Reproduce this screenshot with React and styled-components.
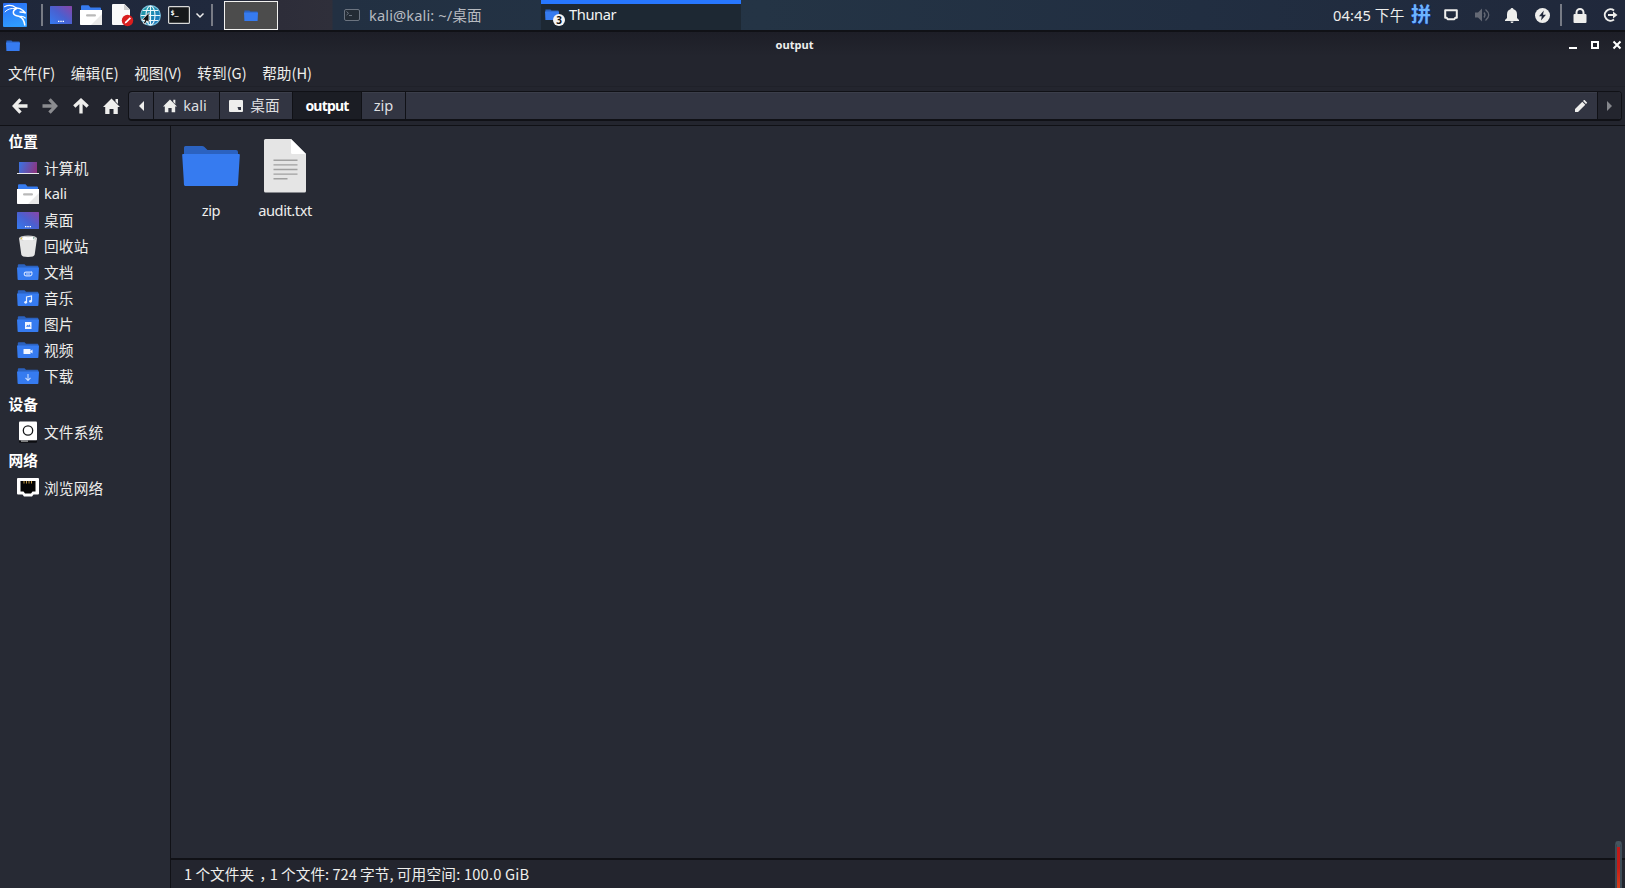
import React from 'react'
import styled, { createGlobalStyle, css } from 'styled-components'

const colors = {
  $bg: '#272a34',
  $bar: '#23252e',
  $line: '#101116',
  $button: '#323542',
  $active: '#1b1d24',
  $blue: '#367bf0',
  $darkBlue: '#2b62c0',
  $text: '#eeeeec',
}

const fonts = {
  $latin: '"Noto Sans", "Noto Sans CJK SC", sans-serif',
  $cjk: '"Noto Sans CJK SC", sans-serif',
}

const GlobalStyle = createGlobalStyle`
  * {
    box-sizing: border-box;
  }

  body {
    margin: 0;
    overflow: hidden;
    background: ${colors.$bg};
    color: ${colors.$text};
    font-family: ${fonts.$cjk};
    font-size: 14.67px;
    line-height: 20px;
    white-space: pre;
  }

  svg {
    display: block;
    flex: none;
    overflow: visible;
  }
`

const Desktop = styled.div`
  width: 1625px;
  height: 888px;
  display: flex;
  flex-direction: column;
`

/* panel */

const Panel = styled.header`
  height: 30px;
  flex: none;
  display: flex;
  align-items: center;
  background: linear-gradient(90deg, #1f273a 0, #20293d 220px, #2d2d39 280px, #2f2f3a 332px, #223042 333px, #243445 760px, #212e41 1200px, #20283b 1625px);
`

const Launchers = styled.div`
  width: 224px;
  height: 30px;
  flex: none;
  display: flex;
  align-items: center;
  padding-left: 3px;
`

const Slot = styled.div`
  width: ${p => p.$w}px;
  flex: none;
  display: flex;
  justify-content: ${p => p.$align || 'flex-start'};
`

const Separator = styled.div`
  width: 2px;
  height: 22px;
  flex: none;
  background: #777b85;
`

const Workspace = styled.div`
  width: 54px;
  height: 29px;
  margin-top: 1px;
  margin-right: 55px;
  flex: none;
  display: flex;
  align-items: center;
  justify-content: center;
  border: 1px solid #f2f2f0;
  background: #4c4c4c;
`

const Task = styled.div`
  width: ${p => p.$w}px;
  height: 30px;
  flex: none;
  display: flex;
  align-items: center;
  font-family: ${fonts.$latin};
  letter-spacing: 0.1px;
  color: #b6bac0;

  ${p => p.$active && css`
    border-top: 4px solid #2777ff;
    background: #1d2833;
    color: #f4f4f4;
    padding-bottom: 6px;
    letter-spacing: -0.4px;
  `}
`

const TaskIcon = styled.div`
  position: relative;
  margin-left: ${p => p.$left}px;
  margin-right: ${p => p.$right}px;
`

const Badge = styled.div`
  position: absolute;
  left: 8px;
  top: 5px;
  width: 12px;
  height: 12px;
  border-radius: 50%;
  background: #f4f4f4;
  color: #111;
  font: bold 10px/12px "Noto Sans", sans-serif;
  text-align: center;
`

const Tray = styled.div`
  margin-left: auto;
  height: 30px;
  display: flex;
  align-items: center;
`

const Clock = styled.div`
  width: 78px;
  letter-spacing: 0.1px;
  font-family: ${fonts.$latin};
`

const Pinyin = styled.div`
  width: 33px;
  margin-top: -3px;
  font-size: 20px;
  font-weight: bold;
  color: #6cb4ff;
  text-shadow: 1px 1px 0 #0a2a8c;
`

/* window */

const TitleBar = styled.div`
  height: 32px;
  flex: none;
  display: grid;
  grid-template-columns: 62px 1fr 100px;
  align-items: center;
  padding: 0 4px 4px 6px;
  border-top: 2px solid ${colors.$line};
  background: linear-gradient(#1d1e27, ${colors.$bar} 24px);
`

const Title = styled.div`
  text-align: center;
  font: bold 11.1px/18px ${fonts.$latin};
`

const WindowButtons = styled.div`
  display: flex;
  justify-content: flex-end;
  gap: 14px;
`

const MenuBar = styled.nav`
  height: 24px;
  flex: none;
  display: flex;
  align-items: center;
  gap: 15.5px;
  padding: 0 8px 2px;
  background: ${colors.$bar};
`

const ToolBar = styled.div`
  height: 40px;
  flex: none;
  display: flex;
  align-items: center;
  padding: 0 3px 0 12px;
  border-top: 1px solid #1f2129;
  border-bottom: 1px solid ${colors.$line};
  background: ${colors.$bar};
`

const PathBar = styled.div`
  height: 30px;
  flex: 1;
  display: flex;
  border: 1px solid ${colors.$line};
  border-bottom-width: 2px;
  border-radius: 4px;
  background: ${colors.$button};
  box-shadow: inset 0 1px 0 #3b3e4a;
`

const Crumb = styled.div`
  width: ${p => p.$w}px;
  flex: none;
  display: flex;
  align-items: center;
  justify-content: center;
  gap: ${p => p.$gap || 0}px;
  padding-right: ${p => p.$gap ? 3 : 0}px;
  border-right: 1px solid ${colors.$line};
  font-family: ${fonts.$latin};
  color: #dedfe0;

  span {
    margin-top: -1px;
  }

  ${p => p.$active && css`
    background: ${colors.$active};
    color: #fff;
    font-size: 14px;
    font-weight: bold;
    letter-spacing: -0.8px;

    span {
      margin-top: 1px;
    }
  `}
`

const PathEntry = styled.div`
  flex: 1;
  display: flex;
  align-items: center;
  justify-content: flex-end;
  padding-right: 10px;
`

const ScrollButton = styled.div`
  width: 24px;
  display: flex;
  align-items: center;
  justify-content: center;
  border-left: 1px solid ${colors.$line};
  border-radius: 0 3px 3px 0;
  background: ${colors.$bar};
`

const Body = styled.div`
  flex: 1;
  min-height: 0;
  display: flex;
`

const SideBar = styled.aside`
  width: 171px;
  flex: none;
  border-right: 1px solid ${colors.$line};
  background: ${colors.$bg};
`

const Heading = styled.div`
  height: 29px;
  padding: 5px 0 0 8.5px;
  line-height: 20px;
  font-weight: bold;
  color: #fff;
`

const Place = styled.div`
  height: ${p => p.$h || 26}px;
  display: flex;
  align-items: center;
  padding-left: 17px;
  letter-spacing: ${p => p.$latin ? -0.2 : 0.2}px;
  font-family: ${p => p.$latin ? fonts.$latin : fonts.$cjk};

  svg {
    margin-right: 5px;
  }

  span {
    margin-top: ${p => p.$h ? 1 : p.$latin ? -3 : -1}px;
  }
`

const Main = styled.main`
  flex: 1;
  display: flex;
  flex-direction: column;
`

const Files = styled.div`
  flex: 1;
  display: flex;
  align-items: flex-start;
  padding: 13px 0 0 3px;
`

const File = styled.div`
  width: 74px;
  display: flex;
  flex-direction: column;
  align-items: center;
  gap: 7px;
  font-family: ${fonts.$latin};
  letter-spacing: -0.45px;
`

const StatusBar = styled.footer`
  height: 30px;
  display: flex;
  align-items: center;
  padding: 0 0 0 13px;
  border-top: 2px solid ${colors.$line};
  background: ${colors.$bar};
`

const Comma = styled.span`
  margin-left: 2px;
  margin-right: 3px;
  font-feature-settings: "halt";
`

const FreeSpace = styled.span`
  letter-spacing: 0.2px;
`

const Meter = styled.div`
  position: absolute;
  left: 1615px;
  top: 841px;
  width: 7px;
  height: 47px;
  border: 2px solid #3e4c57;
  border-top: 6px solid #46545e;
  border-bottom: 0;
  border-radius: 3px 3px 0 0;
  background: linear-gradient(#c01818, #c41d16 50%, #d4401c);
`

/* icons */

const Defs = () => (
  <svg width="0" height="0" style={{ position: 'absolute' }}>
    <linearGradient id="screen" x1="0" y1="1" x2="1" y2="0">
      <stop offset="0" stopColor="#347bf0" />
      <stop offset="0.5" stopColor="#4a60d0" />
      <stop offset="1" stopColor="#8a45a8" />
    </linearGradient>
    <linearGradient id="laptop" x1="0" y1="0.4" x2="1" y2="0.6">
      <stop offset="0" stopColor="#3e6fdc" />
      <stop offset="1" stopColor="#8c3580" />
    </linearGradient>
    <linearGradient id="kali" x1="0" y1="0" x2="0.3" y2="1">
      <stop offset="0" stopColor="#2a6df5" />
      <stop offset="1" stopColor="#2f9bff" />
    </linearGradient>
    <linearGradient id="globe" x1="0" y1="0" x2="1" y2="1">
      <stop offset="0" stopColor="#22a4a0" />
      <stop offset="1" stopColor="#1b6fc4" />
    </linearGradient>
  </svg>
)

const KaliIcon = () => (
  <svg width="24" height="24" viewBox="0 0 24 24" fill="none" stroke="#fff" strokeLinecap="round">
    <rect width="24" height="24" rx="1" fill="url(#kali)" stroke="none" />
    <path d="M1.500 3.800C5 2 9.500 2.200 13 4.800" strokeWidth="1.200" />
    <path d="M2 8.800C4.500 6 8 5 12 5.600" strokeWidth="1" />
    <path d="M12.500 5c3-.3 5.500.6 7.500 2.600l2.700 2.600-3.200-1-2.500-.2" strokeWidth="1.400" />
    <path d="M13.500 5.500c-2.500 1.300-3.600 3-3 4.900.8 2.500 3.800 2.300 6.300 3.300 2.600 1 4.300 3.200 5 8.300" strokeWidth="1.500" />
    <path d="M16.500 13.500c2.500-.4 4.400.1 5.800 1.500" strokeWidth="1.100" />
  </svg>
)

const ScreenIcon = ({ h = 17 }) => (
  <svg width="22" height={h} viewBox="0 0 22 17" preserveAspectRatio="none">
    <rect width="22" height="17" rx="0.500" fill="url(#screen)" />
    <path d="M8 14h1.400v1.200H8zM10.300 14h1.400v1.200h-1.400zM12.600 14H14v1.200h-1.400z" fill="#fff" />
  </svg>
)

const HomeFolder = () => (
  <svg width="22" height="20" viewBox="0 0 22 20">
    <path d="M1 5V1.500Q1 .300 2 .300h6.500L10.500 2.500H20q1 0 1 1V6H1z" fill={colors.$blue} />
    <path d="M0 5h22v14.300q0 .7-.7.7H.7Q0 20 0 19.300z" fill="#fff" />
    <path d="M22 9v10.300q0 .7-.7.7H11z" fill="#e9e9e9" />
    <rect x="6" y="9.300" width="10" height="2.200" rx="1.100" fill="#b9b9b9" />
  </svg>
)

const NoteIcon = () => (
  <svg width="21" height="22" viewBox="0 0 21 22">
    <path d="M1 0h11.500L18 5.500V21H1q-1 0-1-1V1q0-1 1-1z" fill="#fafafa" />
    <path d="M12 0v6h6z" fill="#cfcfcf" />
    <circle cx="15.500" cy="16.500" r="5.700" fill="#d91e1e" />
    <path d="M12.700 19.500l.5-1.700 4.600-4.600 1.200 1.200-4.600 4.600z" fill="#fff" />
  </svg>
)

const GlobeIcon = () => (
  <svg width="21" height="21" viewBox="0 0 21 21" fill="none" stroke="#e9f6fb" strokeWidth="1.100">
    <circle cx="10.500" cy="10.500" r="9.900" fill="url(#globe)" stroke="#78bdda" />
    <ellipse cx="10.500" cy="10.500" rx="4.500" ry="9.500" />
    <path d="M10.500 1v19M1 10.500h19M2.700 5.500h15.600M2.700 15.500h15.600" />
    <path d="M9 7.500v10l-2.200-1.700-1.500 3.300-2-1 1.600-3H1.800z" fill="#111" stroke="#fff" strokeWidth=".8" />
  </svg>
)

const TerminalIcon = () => (
  <svg width="22" height="18" viewBox="0 0 22 18">
    <rect x=".6" y=".6" width="20.800" height="16.800" rx="1" fill="#16181a" stroke="#d8d8d8" strokeWidth="1.200" />
    <text x="2.500" y="8.800" fontSize="6.800" fontWeight="bold" fontFamily="DejaVu Sans Mono, monospace" fill="#fff">$_</text>
  </svg>
)

const TaskTerminal = () => (
  <svg width="16" height="12" viewBox="0 0 16 12" fill="none" stroke="#6b7480">
    <rect x=".5" y=".5" width="15" height="11" rx="1.500" fill="#232b34" />
    <path d="M2.500 2.500l2 1.800-2 1.800M5 6.500h3" />
  </svg>
)

const ChevronIcon = () => (
  <svg width="8" height="5" viewBox="0 0 8 5" fill="none" stroke="#eee" strokeWidth="1.500">
    <path d="M.5.500L4 4 7.500.500" />
  </svg>
)

const SmallFolder = () => (
  <svg width="14" height="11" viewBox="0 0 14 11">
    <path d="M.4 3V.500h5L6.500 1.500h7V4H.4z" fill={colors.$darkBlue} />
    <path d="M0 2.500h14L13.600 11H.4z" fill={colors.$blue} />
  </svg>
)

const FolderIcon = ({ children }) => (
  <svg width="22" height="16" viewBox="0 0 22 16">
    <path d="M.8 4V1.300Q.8.300 1.800.300h5.700L9 1.800h11.500q.8 0 .8.800V5H.8z" fill={colors.$darkBlue} />
    <path d="M0 3.500h22L21.400 15.300q0 .7-.8.7H1.400q-.8 0-.8-.7z" fill={colors.$blue} />
    {children}
  </svg>
)

const LaptopIcon = () => (
  <svg width="22" height="13" viewBox="0 0 22 13">
    <rect x="2" y="0" width="18" height="11" fill="url(#laptop)" />
    <path d="M0 11h22v1H0z" fill="#e8e8ea" />
  </svg>
)

const TrashIcon = () => (
  <svg width="22" height="22" viewBox="0 0 22 22">
    <path d="M2 3l2.300 16.500Q4.600 22 11 22t6.700-2.500L20 3z" fill="#e6e6e6" />
    <ellipse cx="11" cy="3.300" rx="9" ry="2.800" fill="#c9c9c9" />
    <path d="M3.500 4.200L7 1.800l4 .4 5-.5 2.500 2.300-3 1.500H7z" fill="#fff" />
    <path d="M3.500 3l1.200-.7.8 2.500-1.200-.5z" fill="#e2c44a" />
    <path d="M16 2l1.500.7-.7 1.800z" fill="#4a8a78" />
  </svg>
)

const DiskIcon = () => (
  <svg width="22" height="22" viewBox="0 0 22 22">
    <rect x="2" y="0.500" width="18" height="19" rx="1" fill="#fff" />
    <circle cx="11" cy="9.500" r="4.700" fill="none" stroke="#16181a" strokeWidth="1.300" />
    <path d="M2 19.500h18v1.200q0 1-1 1H3q-1 0-1-1z" fill="#0c0d10" />
    <path d="M4 19.600h7v1H4z" fill="#ccc" />
  </svg>
)

const NetworkIcon = () => (
  <svg width="22" height="19" viewBox="0 0 22 19">
    <path d="M1 0h20q1 0 1 1v14.500q0 1-1 1h-4.500L15 18.500H7L5.500 16.500H1q-1 0-1-1V1q0-1 1-1z" fill="#fff" />
    <path d="M3.500 3h15v10.500h-3l-1.500 2H8l-1.500-2h-3z" fill="#050505" />
    <path d="M7 3v2.500M9.500 3v2.500M12 3v2.500M14.500 3v2.500" stroke="#c49a45" />
  </svg>
)

const BigFolder = () => (
  <svg width="58" height="54" viewBox="0 0 58 54">
    <path d="M2 16V8.500Q2 7 3.500 7H20q1.500 0 2.500 1l3 3H54q2 0 2 2v6H2z" fill={colors.$darkBlue} />
    <path d="M1 15h56q.8 0 .8 1L56 45.500q-.1 1.500-1.500 1.500h-51Q2.100 47 2 45.500L.2 16q0-1 .8-1z" fill={colors.$blue} />
  </svg>
)

const TextFile = () => (
  <svg width="42" height="54" viewBox="0 0 42 54">
    <path d="M1.500 0H27l15 15v37q0 1.500-1.500 1.500h-39Q0 53.500 0 52V1.500Q0 0 1.500 0z" fill="#e5e5e5" />
    <path d="M27 0l15 15H28.500Q27 15 27 13.500z" fill="#fff" />
    <path d="M9.500 21.300h24M9.500 25.900h24M9.500 30.500h24M9.500 35.100h24M9.500 39.700h14" stroke="#a0a0a0" strokeWidth="1.400" />
  </svg>
)

const Arrow = ({ turn, color = colors.$text }) => (
  <svg width="16" height="16" viewBox="0 0 16 16" fill="none" stroke={color} strokeWidth="3.300" transform={`rotate(${turn})`}>
    <path d="M15.500 8H3M8.500 1.300L2.300 8l6.200 6.700" />
  </svg>
)

const HouseIcon = ({ size = 17 }) => (
  <svg width={size} height={size * 0.94} viewBox="0 0 17 16" fill={colors.$text}>
    <path d="M8.500.500L17 9h-2.200v7H10.500v-5h-4v5H2.200V9H0zM12.500 1H15v5l-2.500-2.500z" />
  </svg>
)

const DeskIcon = () => (
  <svg width="14" height="12" viewBox="0 0 14 12">
    <rect width="14" height="12" rx="1" fill={colors.$text} />
    <path d="M8.500 7h3.500v3H9.500z" fill="#323542" />
  </svg>
)

const Triangle = ({ right, color }) => (
  <svg width="5" height="10" viewBox="0 0 5 10" fill={color}>
    <path d={right ? 'M0 0l5 5-5 5z' : 'M5 0L0 5l5 5z'} />
  </svg>
)

const PencilIcon = () => (
  <svg width="12" height="12" viewBox="0 0 12 12" fill={colors.$text}>
    <path d="M0 12V9L7.300 1.700l3 3L3 12zM8 1l1-1q.3-.2.600 0L12 2.400q.2.300 0 .6l-1 1z" />
  </svg>
)

const MonitorIcon = () => (
  <svg width="14" height="12" viewBox="0 0 14 12" fill="none" stroke={colors.$text} strokeWidth="2" strokeLinejoin="round">
    <path d="M1.200 1.200h11.600v7.600h-1.500l-1 1.500H3.700l-1-1.500H1.200z" />
  </svg>
)

const VolumeIcon = () => (
  <svg width="15" height="14" viewBox="0 0 15 14" fill="none" stroke="#646975" strokeWidth="1.300">
    <path d="M0 4.500h3L7 .500v13L3 9.500H0z" fill="#646975" stroke="none" />
    <path d="M9 4.500q2 2.500 0 5M10.500 1.500q6.500 5.500 0 11" />
  </svg>
)

const BellIcon = () => (
  <svg width="14" height="15" viewBox="0 0 14 15" fill={colors.$text}>
    <path d="M7 0q1.300 0 1.500 1.300Q12 2.400 12 6.500V10l2 2v1H0v-1l2-2V6.500q0-4.100 3.500-5.200Q5.700 0 7 0zM5.500 13.500h3Q8.500 15 7 15t-1.500-1.500z" />
  </svg>
)

const PowerIcon = () => (
  <svg width="15" height="15" viewBox="0 0 15 15">
    <circle cx="7.500" cy="7.500" r="7.500" fill={colors.$text} />
    <path d="M8.800 2.500L4 8.300h2.800L6 12.500 11 6.800H8z" fill="#20283b" />
  </svg>
)

const LockIcon = () => (
  <svg width="14" height="15" viewBox="0 0 14 15">
    <rect x=".5" y="6" width="13" height="9" rx="1" fill={colors.$text} />
    <path d="M3.500 7V4.500a3.500 3.500 0 017 0V7" fill="none" stroke={colors.$text} strokeWidth="2" />
  </svg>
)

const LogoutIcon = () => (
  <svg width="15" height="14" viewBox="0 0 15 14" fill="none" stroke={colors.$text} strokeWidth="2">
    <path d="M11 2.500A5.700 5.700 0 1011 11.500" />
    <path d="M5 7h6" />
    <path d="M10 3.500L14.500 7 10 10.500z" fill={colors.$text} stroke="none" />
  </svg>
)

const places = [
  { name: '计算机', icon: <LaptopIcon /> },
  { name: 'kali', icon: <HomeFolder />, latin: true },
  { name: '桌面', icon: <ScreenIcon /> },
  { name: '回收站', icon: <TrashIcon /> },
  {
    name: '文档',
    icon: <FolderIcon><path d="M14 8.200H9a1.800 1.800 0 000 3.600h4a2.300 2.300 0 001-4.200M9 10h4" fill="none" stroke="#c9dcff" strokeWidth="1.200" /></FolderIcon>,
  },
  {
    name: '音乐',
    icon: <FolderIcon><path d="M9.500 12V7l5-1v5" fill="none" stroke="#e7f0ff" strokeWidth="1.200" /><circle cx="8.700" cy="12.300" r="1.400" fill="#e7f0ff" /><circle cx="13.500" cy="11.300" r="1.400" fill="#e7f0ff" /></FolderIcon>,
  },
  {
    name: '图片',
    icon: <FolderIcon><rect x="8" y="6" width="6.500" height="7" fill="#f2f6ff" /><path d="M9 10.800l1.500-2 1 1 1-1.500 1 2.500z" fill={colors.$blue} /></FolderIcon>,
  },
  {
    name: '视频',
    icon: <FolderIcon><rect x="6.500" y="7" width="7" height="5" rx=".5" fill="#f2f6ff" /><path d="M13 9.500l2.500-2v4z" fill="#f2f6ff" /></FolderIcon>,
  },
  {
    name: '下载',
    icon: <FolderIcon><path d="M11 6v6.500M8.500 9.800L11 12.500l2.500-2.700" fill="none" stroke="#c9dcff" strokeWidth="1.100" /></FolderIcon>,
  },
]

const App = () => {
  return (
    <Desktop>
      <GlobalStyle />
      <Defs />

      <Panel>
        <Launchers>
          <Slot $w={38}><KaliIcon /></Slot>
          <Separator />
          <Slot $w={7} />
          <Slot $w={30}><ScreenIcon h={18} /></Slot>
          <Slot $w={32}><HomeFolder /></Slot>
          <Slot $w={28}><NoteIcon /></Slot>
          <Slot $w={28}><GlobeIcon /></Slot>
          <Slot $w={28}><TerminalIcon /></Slot>
          <Slot $w={15}><ChevronIcon /></Slot>
          <Separator />
        </Launchers>
        <Workspace><SmallFolder /></Workspace>
        <Task $w={208}>
          <TaskIcon $left={11} $right={9}><TaskTerminal /></TaskIcon>
          kali@kali: ~/桌面
        </Task>
        <Task $w={200} $active>
          <TaskIcon $left={4} $right={10}>
            <SmallFolder />
            <Badge>3</Badge>
          </TaskIcon>
          Thunar
        </Task>
        <Tray>
          <Clock>04:45 下午</Clock>
          <Pinyin>拼</Pinyin>
          <Slot $w={31}><MonitorIcon /></Slot>
          <Slot $w={30}><VolumeIcon /></Slot>
          <Slot $w={30}><BellIcon /></Slot>
          <Slot $w={25}><PowerIcon /></Slot>
          <Separator />
          <Slot $w={11} />
          <Slot $w={30}><LockIcon /></Slot>
          <Slot $w={22}><LogoutIcon /></Slot>
        </Tray>
      </Panel>

      <TitleBar>
        <SmallFolder />
        <Title>output</Title>
        <WindowButtons>
          <svg width="8" height="8" fill="#fff"><path d="M0 6h8v2H0z" /></svg>
          <svg width="8" height="8" fill="none" stroke="#fff" strokeWidth="2"><path d="M1 1h6v6H1z" /></svg>
          <svg width="8" height="8" fill="none" stroke="#fff" strokeWidth="2"><path d="M.5.500l7 7M7.500.500l-7 7" /></svg>
        </WindowButtons>
      </TitleBar>

      <MenuBar>
        <span>文件(F)</span>
        <span>编辑(E)</span>
        <span>视图(V)</span>
        <span>转到(G)</span>
        <span>帮助(H)</span>
      </MenuBar>

      <ToolBar>
        <Slot $w={30}><Arrow turn={0} /></Slot>
        <Slot $w={31}><Arrow turn={180} color="#8b8c90" /></Slot>
        <Slot $w={30}><Arrow turn={90} /></Slot>
        <Slot $w={25}><HouseIcon /></Slot>
        <PathBar>
          <Crumb $w={25}><Triangle color={colors.$text} /></Crumb>
          <Crumb $w={66} $gap={6}><HouseIcon size={14} /><span>kali</span></Crumb>
          <Crumb $w={73} $gap={7}><DeskIcon /><span>桌面</span></Crumb>
          <Crumb $w={69} $active><span>output</span></Crumb>
          <Crumb $w={44}><span>zip</span></Crumb>
          <PathEntry><PencilIcon /></PathEntry>
          <ScrollButton><Triangle right color="#85878c" /></ScrollButton>
        </PathBar>
      </ToolBar>

      <Body>
        <SideBar>
          <Heading>位置</Heading>
          {places.map(p => (
            <Place key={p.name} $latin={p.latin}>
              {p.icon}
              <span>{p.name}</span>
            </Place>
          ))}
          <Heading>设备</Heading>
          <Place $h={27}><DiskIcon /><span>文件系统</span></Place>
          <Heading>网络</Heading>
          <Place $h={27}><NetworkIcon /><span>浏览网络</span></Place>
        </SideBar>
        <Main>
          <Files>
            <File><BigFolder />zip</File>
            <File><TextFile />audit.txt</File>
          </Files>
          <StatusBar>
            <span>1 个文件夹 </span>
            <Comma>，</Comma>
            <span>1 个文件: 724 字节, </span>
            <FreeSpace>可用空间: 100.0 GiB</FreeSpace>
          </StatusBar>
        </Main>
      </Body>
      <Meter />
    </Desktop>
  )
}

export default App
